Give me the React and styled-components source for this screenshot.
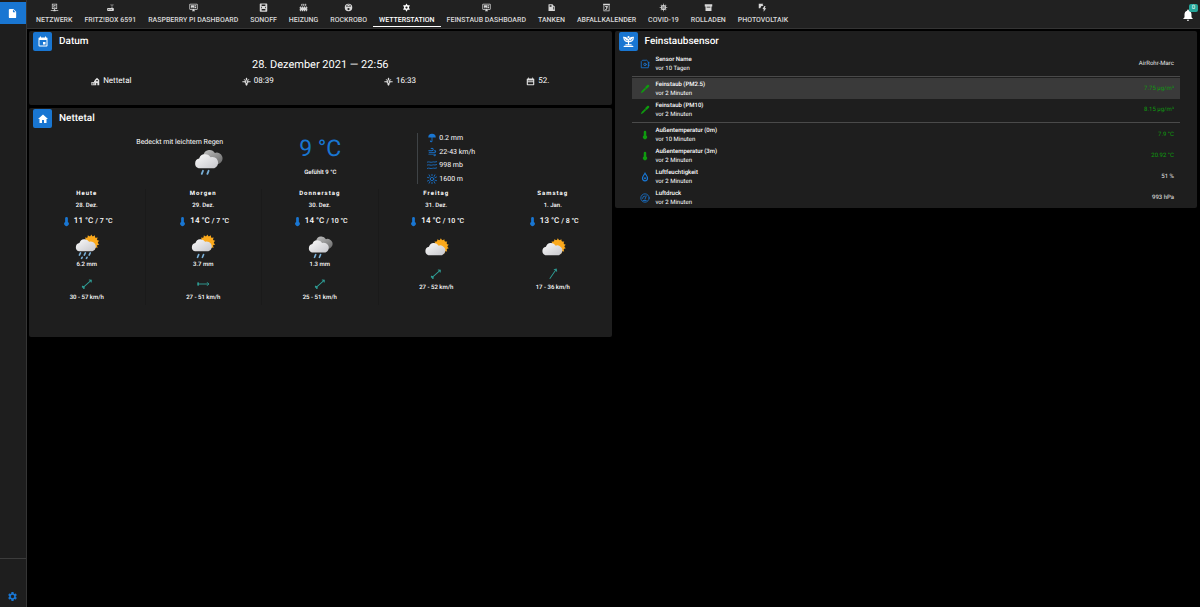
import React from "react";
import styled, { createGlobalStyle } from "styled-components";
import {
  MdInsertDriveFile,
  MdHome,
  MdEvent,
  MdSettings,
  MdNotifications,
  MdCoronavirus,
  MdRouter,
} from "react-icons/md";

const GlobalStyle = createGlobalStyle`
  *, *::before, *::after { box-sizing: border-box; }
  body {
    margin: 0;
    background: #000;
    color: #fff;
    font-family: Roboto, "Liberation Sans", sans-serif;
    font-size: 7px;
    line-height: 10px;
    text-rendering: geometricPrecision;
  }
  button { font: inherit; color: inherit; border: 0; padding: 0; background: none; cursor: pointer; text-rendering: inherit; }
  h1, h2, h3, p, ul, dl, dd { margin: 0; padding: 0; }
  ul { list-style: none; }
  svg { display: block; flex: none; }
`;

const BLUE = "#1976d2";
const GREEN = "#0f9a0f";

/* ---------- icons ---------- */

const PATHS = {
  network:
    "M5 2H19V16H13V18H14A1 1 0 0 1 15 19H22V21H15A1 1 0 0 1 14 22H10A1 1 0 0 1 9 21H2V19H9A1 1 0 0 1 10 18H11V16H5V2M7 4V14H17V4H7M9 6H15V8H11V10H15V12H9V6Z",
  dashboard:
    "M21,16V4H3V16H21M21,2A2,2 0 0,1 23,4V16A2,2 0 0,1 21,18H14V20H16V22H8V20H10V18H3C1.89,18 1,17.1 1,16V4C1,2.89 1.89,2 3,2H21M5,6H14V11H5V6M15,6H19V8H15V6M19,9V14H15V9H19M5,12H9V14H5V12M10,12H14V14H10V12Z",
  socket:
    "M4 1H20A2 2 0 0 1 22 3V21A2 2 0 0 1 20 23H4A2 2 0 0 1 2 21V3A2 2 0 0 1 4 1M7 4V8H17V4H7M6 10V14H8V10H6M16 10V14H18V10H16M7 16V20H17V16H7Z",
  radiator:
    "M8 1L10 3L8 5L10 7H7L5 5L7 3M13 1L15 3L13 5L15 7H12L10 5L12 3M18 1L20 3L18 5L20 7H17L15 5L17 3M3 9H6V12H8V9H11V12H13V9H16V12H18V9H21V12H23V14H21V17H23V19H21V22H18V19H16V22H13V19H11V22H8V19H6V22H3V19H1V17H3V14H1V12H3Z",
  robot:
    "M12 2A10 10 0 1 1 12 22A10 10 0 1 1 12 2M12 4A8 8 0 0 0 5 9H19A8 8 0 0 0 12 4M12 13A3 3 0 1 0 12 19A3 3 0 1 0 12 13M9 5H15V8H9Z",
  sunny:
    "M12 1L15 6L21 6L18.500 12L21 18L15 18L12 23L9 18L3 18L5.500 12L3 6L9 6ZM12 9A3 3 0 1 0 12 15A3 3 0 1 0 12 9Z",
  fuel:
    "M5 3H14A2 2 0 0 1 16 5V6L21 9V21H4V4A1 1 0 0 1 5 3M7 6V10H12V6H7M17 10V17H19V10Z",
  bin: "M3 2H21V5H20V22H4V5H3V2M6 6V20H18V6H6M8 8H16V10H13V12H16V14H13V18H8V16H11V10H8Z",
  shutter: "M2 3H22V9H20V21H4V9H2V3M7 10V12H17V10H7Z",
  solar:
    "M2 2H14L12 5L15 8L9 8L6 14L2 14ZM17 8L12 16H15V23L22 14H18L20 8Z",
  sunrise:
    "M10 4L12 1L14 4V8H10ZM4 7L8 9L7 11H1V14H7L8 17H10V20H8L12 23L16 20H14V17H16L17 14H23V11H17L16 9L20 7L17 6L14 9H10L7 6ZM12 11A2 2 0 1 0 12 15A2 2 0 1 0 12 11Z",
  city: "M1 13H8V10H10V8L16 2L22 8V22H17V16H14V22H1ZM3 15V17H5V15ZM3 18V20H5V18ZM7 15V17H9V15ZM7 18V20H9V18ZM14 8V11H18V8Z",
  calendar:
    "M6 1H8V4H16V1H18V4H20A2 2 0 0 1 22 6V20A2 2 0 0 1 20 22H4A2 2 0 0 1 2 20V6A2 2 0 0 1 4 4H6ZM5 9V11H19V9ZM5 14V19H19V14Z",
  umbrella:
    "M12,2A9,9 0 0,1 21,11H13V19A3,3 0 0,1 10,22A3,3 0 0,1 7,19V18H9V19A1,1 0 0,0 10,20A1,1 0 0,0 11,19V11H3A9,9 0 0,1 12,2Z",
  wind: "M4,10A1,1 0 0,1 3,9A1,1 0 0,1 4,8H12A2,2 0 0,0 14,6A2,2 0 0,0 12,4C11.45,4 10.95,4.22 10.59,4.59C10.2,5 9.56,5 9.17,4.59C8.78,4.2 8.78,3.56 9.17,3.17C9.9,2.45 10.9,2 12,2A4,4 0 0,1 16,6A4,4 0 0,1 12,10H4M19,12A1,1 0 0,0 20,11A1,1 0 0,0 19,10C18.72,10 18.47,10.11 18.29,10.29C17.9,10.68 17.27,10.68 16.88,10.29C16.5,9.9 16.5,9.27 16.88,8.88C17.42,8.34 18.17,8 19,8A3,3 0 0,1 22,11A3,3 0 0,1 19,14H5A1,1 0 0,1 4,13A1,1 0 0,1 5,12H19M18,18H4A1,1 0 0,1 3,17A1,1 0 0,1 4,16H18A3,3 0 0,1 21,19A3,3 0 0,1 18,22C17.17,22 16.42,21.66 15.88,21.12C15.5,20.73 15.5,20.1 15.88,19.71C16.27,19.32 16.9,19.32 17.29,19.71C17.47,19.89 17.72,20 18,20A1,1 0 0,0 19,19A1,1 0 0,0 18,18Z",
  thermometer: "M15 13V5A3 3 0 0 0 9 5V13A5 5 0 1 0 15 13Z",
  brush: "M2 22L4 17L12 9L15 12L7 20ZM12 8L18 2A3 3 0 0 1 22 6L16 12Z",
};

const Icon = ({ name, size = 9, color = "currentColor" }) => (
  <svg width={size} height={size} viewBox="0 0 24 24" fill={color} fillRule="evenodd" aria-hidden="true">
    <path d={PATHS[name]} />
  </svg>
);

const LineIcon = ({ size = 10, color = BLUE, width = 2, children }) => (
  <svg
    width={size}
    height={size}
    viewBox="0 0 24 24"
    fill="none"
    stroke={color}
    strokeWidth={width}
    strokeLinecap="round"
    aria-hidden="true"
  >
    {children}
  </svg>
);

const PressureIcon = () => (
  <LineIcon>
    <path d="M1 5q3-1 6 0t6 0t6 0l4-1M1 12q3-1 6 0t6 0t6 0l4-1M1 20q3-1 6 0t6 0t6 0l4-1" />
  </LineIcon>
);

const VisibilityIcon = () => (
  <LineIcon>
    <circle cx="12" cy="12" r="4" />
    <path d="M12 1v3M12 20v3M1 8l4 1M19 15l4 1M1 17l4-2M19 9l4-2M5 2l2 4M19 2l-2 4M5 22l2-4M19 22l-2-4" />
  </LineIcon>
);

const ChipIcon = () => (
  <LineIcon>
    <path d="M7 3h9l4 4v14H3V7zM20 8h2M20 12h2M20 16h2" />
    <circle cx="12" cy="13" r="3" />
  </LineIcon>
);

const DropIcon = () => (
  <LineIcon width={3}>
    <path d="M12 3C9 8 6 11 6 15a6 6 0 0 0 12 0c0-4-3-7-6-12z" />
    <circle cx="12" cy="15" r="1" />
  </LineIcon>
);

const GaugeIcon = () => (
  <LineIcon>
    <circle cx="12" cy="12" r="10" />
    <path d="M6 13a6 6 0 0 1 6-6M12 15l3-8M8 18h7" />
  </LineIcon>
);

const PlantIcon = () => (
  <LineIcon size={13} color="#fff" width={2}>
    <path d="M4 21h16M7 18h10M12 18v-7M12 12C7 13 4 10 3 4c5 0 8 2 9 8M12 12c0-5 3-8 9-8c0 6-4 9-9 8M6 6l3 3M18 6l-3 3" />
    <circle cx="12" cy="4" r="1" />
  </LineIcon>
);

const ARROWS = { diagonal: -42, right: 0, steep: -56 };

const WindArrow = ({ direction }) => (
  <svg width="14" height="14" viewBox="0 0 24 24" fill="none" stroke="#2f9e96" strokeWidth="1.6" aria-hidden="true">
    <g transform={`rotate(${ARROWS[direction]} 12 12)`}>
      <path d="M2 12H22M19 9l3 3l-3 3" />
      {direction !== "steep" && <path d="M5 12l-3-2M5 12l-3 2M4 9v6" />}
    </g>
  </svg>
);

const SUN_RAYS = Array.from({ length: 14 }, (_, i) => (i * 360) / 14);
const CLOUD = "M9 30a8 8 0 0 1 1-15.500a10 10 0 0 1 18-2a8 8 0 0 1 6 17.500z";

const WeatherIcon = ({ size = 26, sun, drops = 0, label }) => (
  <svg width={size} height={size} viewBox="0 0 48 48" role="img" aria-label={label}>
    <defs>
      <linearGradient id="cloudFront" x1="0" y1="0" x2="1" y2="1">
        <stop offset="0" stopColor="#fafafa" />
        <stop offset="1" stopColor="#c6c6cb" />
      </linearGradient>
      <linearGradient id="cloudBack" x1="0" y1="0" x2="1" y2="1">
        <stop offset="0" stopColor="#c9c9c9" />
        <stop offset="1" stopColor="#686868" />
      </linearGradient>
    </defs>
    <g transform={drops > 0 ? undefined : "translate(1 7)"}>
      {sun ? (
        <g fill="#fba91c">
          {SUN_RAYS.map((a) => (
            <path key={a} d="M32 1l3 5h-6z" transform={`rotate(${a} 32 16)`} />
          ))}
          <circle cx="32" cy="16" r="12" />
        </g>
      ) : (
        <path d={CLOUD} fill="url(#cloudBack)" transform="translate(7 -3)" />
      )}
      <path d={CLOUD} fill="url(#cloudFront)" transform={sun ? "translate(0 2)" : "translate(0 4)"} />
    </g>
    <g stroke="#78aed6" strokeWidth="3" strokeLinecap="round">
      {drops === 2 && <path d="M16 38l-2 5M25 38l-2 5" />}
      {drops > 2 && <path d="M12 35l-2 4M21 35l-2 4M30 35l-2 4M15 43l-1 2M24 43l-1 2" />}
    </g>
  </svg>
);

/* ---------- shell ---------- */

const Shell = styled.div`
  display: flex;
  min-height: 100vh;
`;

const Sidebar = styled.aside`
  display: flex;
  flex-direction: column;
  justify-content: space-between;
  width: 27px;
  flex: none;
  padding-top: 2px;
  background: #1e1e1e;
  border-right: 1px solid #353535;
`;

const SideButton = styled.button`
  display: flex;
  align-items: center;
  justify-content: center;
  width: 100%;
  height: 22px;
  padding-right: 2px;
  background: ${(p) => (p.$active ? BLUE : "none")};
  color: ${(p) => (p.$active ? "#fff" : BLUE)};
`;

const SideFooter = styled.div`
  display: flex;
  align-items: flex-end;
  height: 49px;
  border-top: 1px solid #3c3c3c;
`;

const Page = styled.div`
  flex: 1;
  min-width: 0;
`;

const TopBar = styled.header`
  display: flex;
  justify-content: space-between;
  height: 29px;
  padding: 0 5px 0 3px;
  background: #212121;
  border-bottom: 1px solid #343434;
`;

const Tabs = styled.nav`
  display: flex;
  height: 27px;
`;

const Tab = styled.button`
  display: flex;
  flex-direction: column;
  align-items: center;
  gap: 3px;
  padding: 3px 6px 0;
  white-space: nowrap;
  font-weight: 500;
  text-transform: uppercase;
  color: ${(p) => (p.$active ? "#fff" : "#d8d8d8")};
  border-bottom: 1px solid ${(p) => (p.$active ? "#fff" : "transparent")};
`;

const Bell = styled.button`
  position: relative;
  align-self: center;
  padding-top: 2px;
`;

const Badge = styled.span`
  position: absolute;
  top: -2px;
  right: -3px;
  width: 9px;
  height: 8px;
  border-radius: 2px;
  background: #26a69a;
  font-size: 6px;
  line-height: 8px;
  text-align: center;
`;

const Board = styled.main`
  display: grid;
  grid-template-columns: 1fr 1fr;
  align-items: start;
  gap: 3px;
  padding: 2px 3px 2px 2px;
`;

const Column = styled.div`
  display: grid;
  gap: 3px;
`;

const Card = styled.section`
  background: #1e1e1e;
  border-radius: 2px;
  padding-bottom: ${(p) => p.$bottom || 0}px;
`;

const CardHead = styled.header`
  display: flex;
  align-items: center;
  gap: 7px;
  padding: 1px 4px;
`;

const CardIcon = styled.span`
  display: flex;
  align-items: center;
  justify-content: center;
  width: 19px;
  height: 19px;
  border-radius: 2px;
  background: ${BLUE};
`;

const CardTitle = styled.h2`
  font-size: 10px;
  line-height: 15px;
  font-weight: 500;
`;

/* ---------- date card ---------- */

const DateLine = styled.p`
  padding-top: 5px;
  font-size: 11px;
  line-height: 16px;
  text-align: center;
`;

const DateFacts = styled.ul`
  display: flex;
  justify-content: space-around;
  padding: 2px 7px 0;
`;

const DateFact = styled.li`
  display: flex;
  align-items: center;
  gap: 3px;
  font-size: 8px;

  svg { margin-top: 2px; }
`;

/* ---------- weather card ---------- */

const Current = styled.div`
  display: grid;
  grid-template-columns: 1fr 1fr 1fr;
  padding-top: 4px;
`;

const Condition = styled.div`
  display: flex;
  flex-direction: column;
  align-items: flex-end;
  padding-top: 4px;
`;

const CurrentTemp = styled.div`
  display: flex;
  flex-direction: column;
  align-items: center;
  gap: 5px;
  padding-top: 2px;
`;

const Degrees = styled.strong`
  font-size: 23px;
  line-height: 28px;
  font-weight: 400;
  color: ${BLUE};
`;

const Small = styled.span`
  font-size: 6px;
  line-height: 10px;
  font-weight: ${(p) => (p.$bold ? 500 : 400)};
`;

const Measures = styled.ul`
  display: grid;
  align-content: space-between;
  height: 51px;
  padding-left: 9px;
  border-left: 1px solid #3f4346;
`;

const Measure = styled.li`
  display: flex;
  align-items: center;
  gap: 2px;
`;

const Forecast = styled.div`
  display: grid;
  grid-template-columns: repeat(5, 1fr);
  padding-top: 5px;
`;

const Day = styled.article`
  display: flex;
  flex-direction: column;
  align-items: center;
  min-height: 116px;
  border-right: 1px solid ${(p) => (p.$divided ? "#1a1a1a" : "transparent")};
`;

const DayName = styled.h3`
  font-size: 6px;
  line-height: 10px;
  font-weight: 700;
  letter-spacing: 1px;
`;

const DayDate = styled(Small)`
  margin-top: 2px;
`;

const DayTemps = styled.p`
  display: flex;
  align-items: center;
  gap: 2px;
  margin: 4px 0 7px;
  font-size: 8px;
  line-height: 12px;
  font-weight: 500;

  small { font-size: 7px; }
`;

const DayWind = styled.div`
  display: flex;
  flex-direction: column;
  align-items: center;
  gap: 2px;
  margin-top: 7px;
`;

/* ---------- sensor card ---------- */

const SensorList = styled.ul`
  padding: 1px 17px 0;
`;

const Sensor = styled.li`
  display: flex;
  align-items: center;
  gap: 6px;
  height: 21px;
  padding: 0 6px 0 8px;
  background: ${(p) => (p.$hover ? "#3a3a3a" : "none")};
`;

const SensorText = styled.div`
  display: flex;
  flex-direction: column;
  flex: 1;

  span { line-height: 9px; }
`;

const SensorValue = styled.span`
  font-size: 6px;
  color: ${(p) => (p.$green ? GREEN : "#e6e6e6")};
`;

const Rule = styled.li`
  height: 1px;
  margin: 2px 0 1px;
  background: #4a4a4a;
`;

/* ---------- data ---------- */

const tabs = [
  ["Netzwerk", <Icon name="network" />],
  ["Fritz!Box 6591", <MdRouter size={9} />],
  ["Raspberry Pi Dashboard", <Icon name="dashboard" />],
  ["Sonoff", <Icon name="socket" />],
  ["Heizung", <Icon name="radiator" />],
  ["Rockrobo", <Icon name="robot" />],
  ["Wetterstation", <Icon name="sunny" />],
  ["Feinstaub Dashboard", <Icon name="dashboard" />],
  ["Tanken", <Icon name="fuel" />],
  ["Abfallkalender", <Icon name="bin" />],
  ["COVID-19", <MdCoronavirus size={9} />],
  ["Rolladen", <Icon name="shutter" />],
  ["Photovoltaik", <Icon name="solar" />],
];

const dateFacts = [
  ["city", "Nettetal"],
  ["sunrise", "08:39"],
  ["sunrise", "16:33"],
  ["calendar", "52."],
];

const measures = [
  [<Icon name="umbrella" size={10} color={BLUE} />, "0.2 mm"],
  [<Icon name="wind" size={10} color={BLUE} />, "22-43 km/h"],
  [<PressureIcon />, "998 mb"],
  [<VisibilityIcon />, "1600 m"],
];

const days = [
  { name: "Heute", date: "28. Dez.", high: "11 °C", low: "7 °C", sun: true, drops: 6, rain: "6.2 mm", arrow: "diagonal", wind: "30 - 57 km/h" },
  { name: "Morgen", date: "29. Dez.", high: "14 °C", low: "7 °C", sun: true, drops: 2, rain: "3.7 mm", arrow: "right", wind: "27 - 51 km/h" },
  { name: "Donnerstag", date: "30. Dez.", high: "14 °C", low: "10 °C", sun: false, drops: 2, rain: "1.3 mm", arrow: "diagonal", wind: "25 - 51 km/h" },
  { name: "Freitag", date: "31. Dez.", high: "14 °C", low: "10 °C", sun: true, drops: 0, arrow: "diagonal", wind: "27 - 52 km/h" },
  { name: "Samstag", date: "1. Jan.", high: "13 °C", low: "8 °C", sun: true, drops: 0, arrow: "steep", wind: "17 - 36 km/h" },
];

const sensorGroups = [
  [{ icon: <ChipIcon />, name: "Sensor Name", age: "vor 10 Tagen", value: "AirRohr-Marc" }],
  [
    { icon: <Icon name="brush" size={10} color={GREEN} />, name: "Feinstaub (PM2.5)", age: "vor 2 Minuten", value: "7.75 µg/m³", green: true, hover: true },
    { icon: <Icon name="brush" size={10} color={GREEN} />, name: "Feinstaub (PM10)", age: "vor 2 Minuten", value: "8.15 µg/m³", green: true },
  ],
  [
    { icon: <Icon name="thermometer" size={10} color={GREEN} />, name: "Außentemperatur (0m)", age: "vor 10 Minuten", value: "7.9 °C", green: true },
    { icon: <Icon name="thermometer" size={10} color={GREEN} />, name: "Außentemperatur (3m)", age: "vor 2 Minuten", value: "20.92 °C", green: true },
    { icon: <DropIcon />, name: "Luftfeuchtigkeit", age: "vor 2 Minuten", value: "51 %" },
    { icon: <GaugeIcon />, name: "Luftdruck", age: "vor 2 Minuten", value: "993 hPa" },
  ],
];

const Header = ({ icon, title }) => (
  <CardHead>
    <CardIcon>{icon}</CardIcon>
    <CardTitle>{title}</CardTitle>
  </CardHead>
);

export default function App() {
  return (
    <>
      <GlobalStyle />
      <Shell>
        <Sidebar>
          <SideButton $active aria-label="Seite">
            <MdInsertDriveFile size={11} />
          </SideButton>
          <SideFooter>
            <SideButton aria-label="Einstellungen">
              <MdSettings size={11} />
            </SideButton>
          </SideFooter>
        </Sidebar>
        <Page>
          <TopBar>
            <Tabs>
              {tabs.map(([label, icon]) => (
                <Tab key={label} $active={label === "Wetterstation"}>
                  {icon}
                  <span>{label}</span>
                </Tab>
              ))}
            </Tabs>
            <Bell aria-label="Benachrichtigungen">
              <MdNotifications size={14} />
              <Badge>0</Badge>
            </Bell>
          </TopBar>
          <Board>
            <Column>
              <Card $bottom={19}>
                <Header icon={<MdEvent size={12} />} title="Datum" />
                <DateLine>28. Dezember 2021 — 22:56</DateLine>
                <DateFacts>
                  {dateFacts.map(([icon, text]) => (
                    <DateFact key={text}>
                      <Icon name={icon} size={9} color="#e0e0e0" />
                      {text}
                    </DateFact>
                  ))}
                </DateFacts>
              </Card>
              <Card $bottom={32}>
                <Header icon={<MdHome size={12} />} title="Nettetal" />
                <Current>
                  <Condition>
                    <span>Bedeckt mit leichtem Regen</span>
                    <WeatherIcon size={30} drops={2} label="Bedeckt mit leichtem Regen" />
                  </Condition>
                  <CurrentTemp>
                    <Degrees>9 °C</Degrees>
                    <Small $bold>Gefühlt 9 °C</Small>
                  </CurrentTemp>
                  <Measures>
                    {measures.map(([icon, text]) => (
                      <Measure key={text}>
                        {icon}
                        {text}
                      </Measure>
                    ))}
                  </Measures>
                </Current>
                <Forecast>
                  {days.map((d, i) => (
                    <Day key={d.name} $divided={i < 3}>
                      <DayName>{d.name}</DayName>
                      <DayDate $bold>{d.date}</DayDate>
                      <DayTemps>
                        <Icon name="thermometer" size={11} color={BLUE} />
                        <span>
                          {d.high} <small>/ {d.low}</small>
                        </span>
                      </DayTemps>
                      <WeatherIcon sun={d.sun} drops={d.drops} label={d.name} />
                      {d.rain && <Small $bold>{d.rain}</Small>}
                      <DayWind>
                        <WindArrow direction={d.arrow} />
                        <Small $bold>{d.wind}</Small>
                      </DayWind>
                    </Day>
                  ))}
                </Forecast>
              </Card>
            </Column>
            <Card>
              <Header icon={<PlantIcon />} title="Feinstaubsensor" />
              <SensorList>
                {sensorGroups.map((group, g) => (
                  <React.Fragment key={g}>
                    {g > 0 && <Rule role="separator" />}
                    {group.map((s) => (
                      <Sensor key={s.name} $hover={s.hover}>
                        {s.icon}
                        <SensorText>
                          <Small $bold>{s.name}</Small>
                          <Small>{s.age}</Small>
                        </SensorText>
                        <SensorValue $green={s.green}>{s.value}</SensorValue>
                      </Sensor>
                    ))}
                  </React.Fragment>
                ))}
              </SensorList>
            </Card>
          </Board>
        </Page>
      </Shell>
    </>
  );
}
